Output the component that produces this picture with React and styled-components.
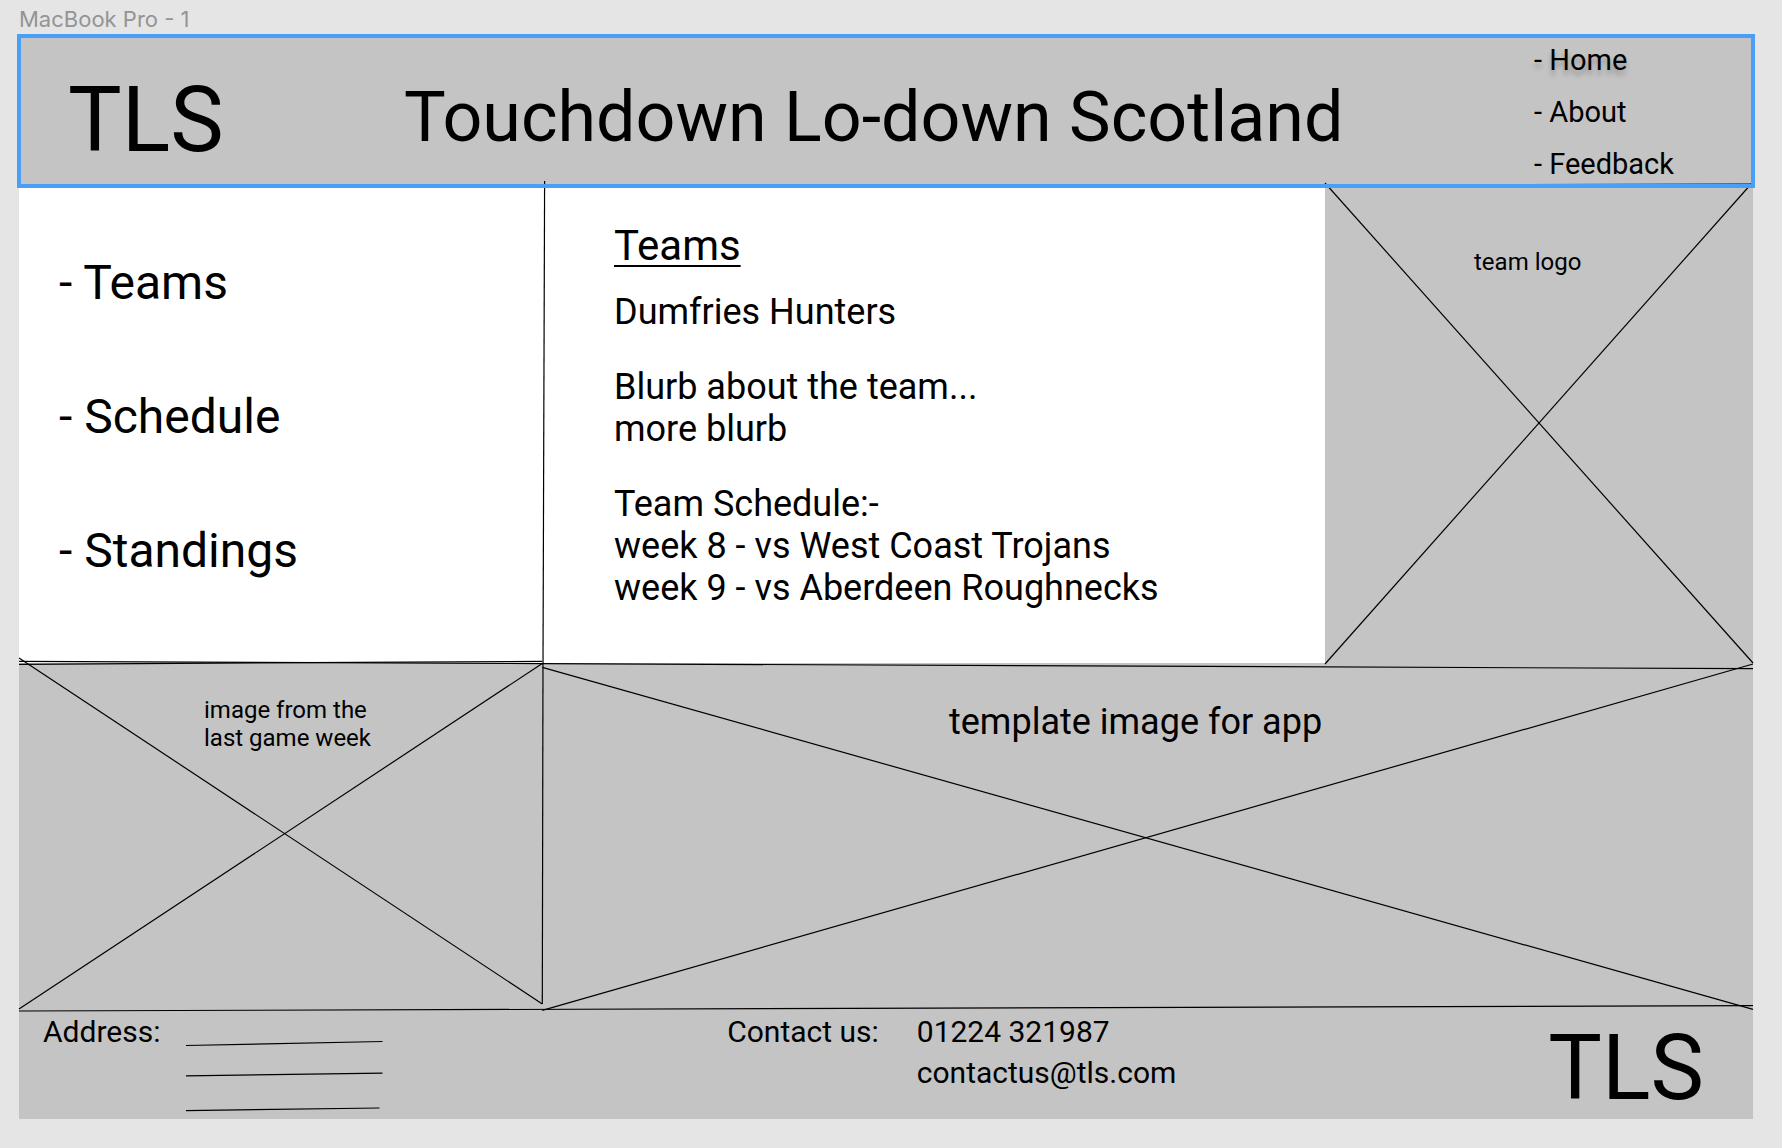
import React from "react";
import styled, { createGlobalStyle } from "styled-components";

const GlobalStyle = createGlobalStyle`
  *, *::before, *::after { box-sizing: border-box; }
  body {
    margin: 0;
    background: #e5e5e5;
    color: #000;
    font-family: Roboto, "Liberation Sans", sans-serif;
  }
  h1, h2, p, ul, dl, dd, dt { margin: 0; padding: 0; font-weight: 400; }
  ul { list-style: none; }
  a { color: inherit; text-decoration: none; }
`;

const Canvas = styled.div`
  padding: 6px 29px 29px 19px;
`;

const FrameLabel = styled.p`
  padding-bottom: 4px;
  font-family: Inter, "Liberation Sans", sans-serif;
  font-size: 22px;
  line-height: 26px;
  color: #949494;
`;

const Frame = styled.div`
  background: #fff;
`;

const Header = styled.header`
  position: relative;
  display: grid;
  grid-template-columns: 385fr 1128fr 221fr;
  align-items: start;
  min-height: 150px;
  background: #c4c4c4;

  &::after {
    content: "";
    position: absolute;
    inset: -2px;
    z-index: 3;
    border: 4px solid #489ff5;
    pointer-events: none;
  }
`;

const Brand = styled.p`
  padding: ${(p) => (p.$footer ? "15px 49px 0 0" : "40px 0 0 49px")};
  font-size: 90px;
  line-height: 90px;
`;

const Title = styled.h1`
  padding-top: 40px;
  font-size: 70px;
  line-height: 82px;
  white-space: nowrap;
`;

const TopNav = styled.ul`
  display: grid;
  gap: 18px;
  padding: 7px 0 0 2px;
  font-size: 29px;
  line-height: 34px;
`;

const TopLink = styled.a`
  text-shadow: ${(p) => (p.$current ? "0 5px 5px rgba(0, 0, 0, 0.25)" : "none")};
`;

const Row = styled.div`
  display: grid;
  grid-template-columns: ${(p) => p.$columns};
`;

const Sidebar = styled.nav`
  position: relative;
  padding: 69px 0 0 40px;
`;

const SideList = styled.ul`
  display: grid;
  gap: 78px;
  font-size: 48px;
  line-height: 56px;
`;

const Article = styled.main`
  padding: 35px 40px 54px 71px;
  font-size: 36px;
  line-height: 42px;
`;

const Heading = styled.h2`
  margin-bottom: 20px;
  font-size: 42px;
  line-height: 50px;
  text-decoration: underline;
  text-decoration-thickness: 2px;
  text-underline-offset: 5px;
`;

const Paragraph = styled.p`
  & + & { margin-top: 33px; }
`;

const Placeholder = styled.div`
  position: relative;
  min-height: ${(p) => p.$height};
  padding: ${(p) => p.$pad};
  background: #c4c4c4;
  font-size: ${(p) => (p.$large ? "36px" : "24px")};
  line-height: ${(p) => (p.$large ? "42px" : "28px")};
`;

const Drawing = styled.svg`
  position: absolute;
  inset: 0;
  z-index: 2;
  width: 100%;
  height: 100%;
  overflow: visible;
  pointer-events: none;
`;

const Footer = styled.footer`
  position: relative;
  display: grid;
  grid-template-columns: 708fr 821fr auto;
  align-items: start;
  min-height: 110px;
  background: #c4c4c4;
  font-size: 30px;
  line-height: 41px;
`;

const Address = styled.div`
  display: flex;
  gap: 26px;
  padding: 2px 0 0 24px;
`;

const BlankLines = styled.svg`
  width: 198px;
  height: 102px;
`;

const Contact = styled.dl`
  display: flex;
  gap: 38px;
  padding-top: 2px;
`;

function Strokes({ width, height, lines }) {
  return (
    <Drawing viewBox={`0 0 ${width} ${height}`} preserveAspectRatio="none" aria-hidden="true">
      {lines.map(([x1, y1, x2, y2], i) => (
        <line
          key={i}
          x1={x1}
          y1={y1}
          x2={x2}
          y2={y2}
          stroke="#000"
          strokeWidth="1.2"
          vectorEffect="non-scaling-stroke"
        />
      ))}
    </Drawing>
  );
}

const topLinks = ["Home", "About", "Feedback"];
const sideLinks = ["Teams", "Schedule", "Standings"];

export default function App() {
  return (
    <>
      <GlobalStyle />
      <Canvas>
        <FrameLabel>MacBook Pro - 1</FrameLabel>
        <Frame>
          <Header>
            <Brand>TLS</Brand>
            <Title>Touchdown Lo-down Scotland</Title>
            <nav aria-label="Site">
              <TopNav>
                {topLinks.map((name) => (
                  <li key={name}>
                    <TopLink href={`#${name.toLowerCase()}`} $current={name === "Home"}>
                      - {name}
                    </TopLink>
                  </li>
                ))}
              </TopNav>
            </nav>
          </Header>

          <Row $columns="524fr 782fr 428fr">
            <Sidebar aria-label="League">
              <SideList>
                {sideLinks.map((name) => (
                  <li key={name}>
                    <a href={`#${name.toLowerCase()}`}>- {name}</a>
                  </li>
                ))}
              </SideList>
              <Strokes
                width={524}
                height={477}
                lines={[
                  [525.6, -5, 524, 477],
                  [0, 478.3, 523, 475.3],
                ]}
              />
            </Sidebar>
            <Article>
              <Heading>Teams</Heading>
              <Paragraph>Dumfries Hunters</Paragraph>
              <Paragraph>
                Blurb about the team...
                <br />
                more blurb
              </Paragraph>
              <Paragraph>
                Team Schedule:-
                <br />
                week 8 - vs West Coast Trojans
                <br />
                week 9 - vs Aberdeen Roughnecks
              </Paragraph>
            </Article>
            <Placeholder $height="477px" $pad="62px 0 0 149px">
              team logo
              <Strokes
                width={428}
                height={477}
                lines={[
                  [0, -3, 428, 477],
                  [0, 478, 427, -3],
                  [0, -1, 428, -2],
                ]}
              />
            </Placeholder>
          </Row>

          <Row $columns="524fr 1210fr">
            <Placeholder $height="346px" $pad="33px 0 0 185px">
              image from the
              <br />
              last game week
              <Strokes
                width={524}
                height={346}
                lines={[
                  [0, -5, 523.3, 341],
                  [0, 346, 523.3, 0.5],
                  [524, 0, 523.3, 341],
                  [0, -1.7, 524, 0.6],
                ]}
              />
            </Placeholder>
            <Placeholder $large $height="346px" $pad="38px 0 0 406px">
              template image for app
              <Strokes
                width={1210}
                height={346}
                lines={[
                  [-0.7, 4.3, 1210, 346.4],
                  [-0.7, 347.3, 1210, 1],
                  [0, 0.6, 1210, 5.7],
                ]}
              />
            </Placeholder>
          </Row>

          <Footer>
            <Strokes width={1734} height={110} lines={[[0, 2, 1734, -3.4]]} />
            <Address>
              <span>Address:</span>
              <BlankLines viewBox="0 0 198 102" stroke="#000" strokeWidth="1.2" aria-hidden="true">
                <line x1="0" y1="34.5" x2="196.5" y2="30.5" />
                <line x1="0" y1="64.8" x2="196.5" y2="62.2" />
                <line x1="0" y1="99.6" x2="193.5" y2="97" />
              </BlankLines>
            </Address>
            <Contact>
              <dt>Contact us:</dt>
              <dd>
                01224 321987
                <br />
                <a href="mailto:contactus@tls.com">contactus@tls.com</a>
              </dd>
            </Contact>
            <Brand $footer>TLS</Brand>
          </Footer>
        </Frame>
      </Canvas>
    </>
  );
}
